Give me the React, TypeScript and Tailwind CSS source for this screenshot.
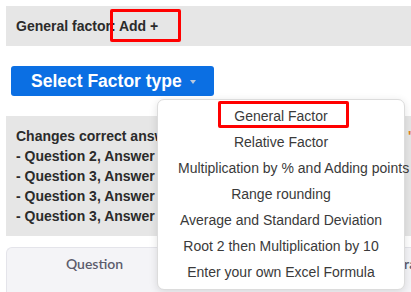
import React from "react";

const FACTOR_TYPES = [
  "General Factor",
  "Relative Factor",
  "Multiplication by % and Adding points",
  "Range rounding",
  "Average and Standard Deviation",
  "Root 2 then Multiplication by 10",
  "Enter your own Excel Formula",
];

const CHANGES = [
  "- Question 2, Answer 1 is now the correct answer",
  "- Question 3, Answer 2 is now the correct answer",
  "- Question 3, Answer 3 is now the correct answer",
  "- Question 3, Answer 4 is now the correct answer",
];

export default function App() {
  return (
    <main
      className="relative w-[411px] h-[292px] overflow-hidden bg-white text-[#333]"
      style={{ fontFamily: "'Liberation Sans', Arial, sans-serif" }}
    >
      <div className="pt-[6px] pl-[6px]">
        {/* header bar */}
        <div className="h-[40px] w-[600px] bg-[#e6e6e6] flex items-center pl-[10px] text-[14px] font-bold text-[#2b2b2b]">
          General factor: Add +
        </div>

        <div className="mt-[20px] pl-[5px]">
          <button className="h-[30px] w-[203px] rounded-[3px] bg-[#0b6fe3] pl-[20px] flex items-center text-white text-[17.5px] font-bold">
            Select Factor type
            <span className="ml-[8px] mt-[1px] w-0 h-0 border-l-[3.5px] border-r-[3.5px] border-t-[4px] border-l-transparent border-r-transparent border-t-[#b9c9de]" />
          </button>
        </div>

        {/* changes panel */}
        <div className="mt-[20px] w-[600px] bg-[#e6e6e6] pl-[10px] py-[10px] text-[14px] font-bold leading-[20px] text-[#2b2b2b]">
          <div className="flex">
            <span className="w-[392px] shrink-0 whitespace-nowrap overflow-hidden">
              Changes correct answers in the following questions:
            </span>
            <span className="text-[#e5821f]">'</span>
          </div>
          {CHANGES.map((c, i) => (
            <div key={i} className="whitespace-nowrap">
              {c}
            </div>
          ))}
        </div>

        {/* table */}
        <div className="mt-[11px] w-[600px] rounded-tl-[6px] border-t border-l border-[#e4e4ea] bg-[#f4f4f7] grid grid-cols-[175px_212px_1fr] h-[46px] pt-[6px]">
          <div
            className="text-center text-[14px] font-semibold leading-[20px] text-[#5c5c6c]"
            style={{ fontFamily: "Lato, 'Liberation Sans', sans-serif" }}
          >
            Question
          </div>
          <div
            className="text-center text-[14px] font-semibold leading-[20px] text-[#5c5c6c]"
            style={{ fontFamily: "Lato, 'Liberation Sans', sans-serif" }}
          >
            Answer
          </div>
          <div
            className="text-left text-[14px] font-semibold leading-[20px] text-[#5c5c6c]"
            style={{ fontFamily: "Lato, 'Liberation Sans', sans-serif" }}
          >
            Grade
          </div>
        </div>
      </div>

      {/* annotation around "Add +" */}
      <div className="absolute left-[110px] top-[9px] w-[71px] h-[33px] border-[3px] border-[#ff0000] rounded-[2px]" />

      {/* dropdown menu */}
      <div className="absolute left-[157px] top-[99px] w-[248px] h-[191px] rounded-[7px] border border-[#dcdcdc] bg-white shadow-[0_2px_8px_rgba(0,0,0,0.12)] pt-[3px]">
        {FACTOR_TYPES.map((t, i) => (
          <div
            key={t}
            className="relative h-[26px] px-[20px] text-center whitespace-nowrap text-[14px] leading-[26px] text-[#3a3a3a]"
          >
            {t}
            {i === 0 && (
              <div className="absolute left-[60px] top-[-2px] w-[131px] h-[27px] border-[3px] border-[#ff0000] rounded-[2px]" />
            )}
          </div>
        ))}
      </div>
    </main>
  );
}
